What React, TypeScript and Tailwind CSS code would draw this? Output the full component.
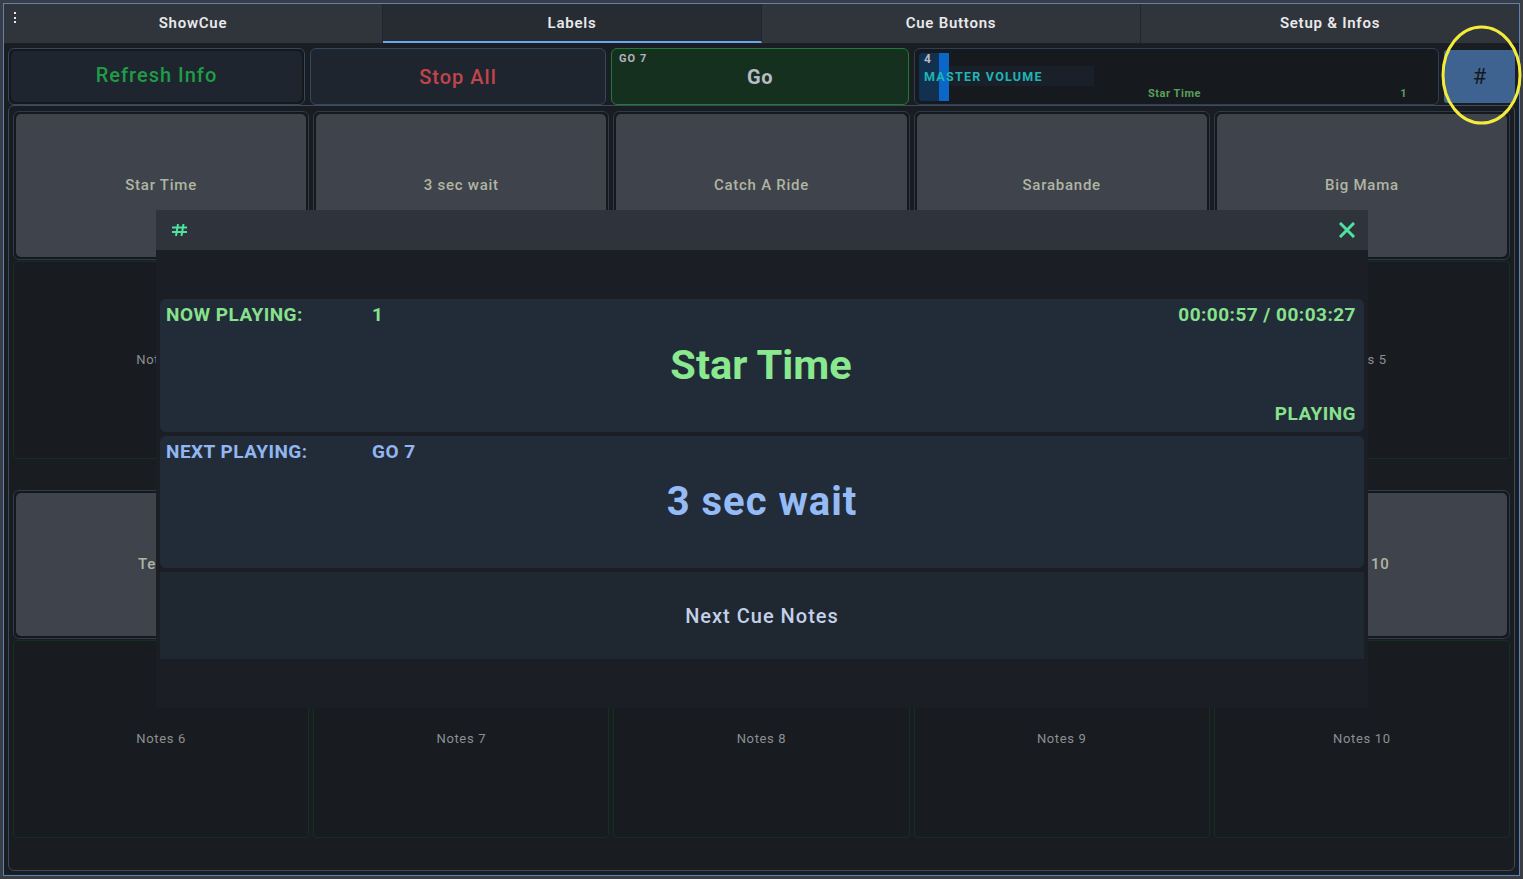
import React from "react";

const tabs = ["ShowCue", "Labels", "Cue Buttons", "Setup & Infos"];

const rows = [
  {
    cues: ["Star Time", "3 sec wait", "Catch A Ride", "Sarabande", "Big Mama"],
    notes: ["Notes 1", "Notes 2", "Notes 3", "Notes 4", "Notes 5"],
  },
  {
    cues: ["Test 6", "Test 7", "Test 8", "Test 9", "Test 10"],
    notes: ["Notes 6", "Notes 7", "Notes 8", "Notes 9", "Notes 10"],
  },
];

function HashIcon() {
  return (
    <svg width="15" height="12" viewBox="0 0 15 12" fill="none">
      <path d="M0 3.5H15M0 8H15" stroke="#4fe3a0" strokeWidth="2" />
      <path d="M6 0L4 12M11.5 0L9.5 12" stroke="#4fe3a0" strokeWidth="2" />
    </svg>
  );
}

function CloseIcon() {
  return (
    <svg width="16" height="16" viewBox="0 0 16 16" fill="none">
      <path d="M2 2L14 14M14 2L2 14" stroke="#4fe3a0" strokeWidth="3" strokeLinecap="square" />
    </svg>
  );
}

export default function App() {
  return (
    <div className="relative w-[1523px] h-[879px] overflow-hidden bg-[#3a3d43] p-[3px] font-['Roboto',sans-serif]">
      <div className="flex h-full flex-col border border-[#5a82b5] bg-[#1a1d22]">
        {/* tab bar */}
        <div className="relative flex h-[40px] shrink-0 border-b border-[#1c1f24] bg-[#30343b]">
          <div className="absolute left-[10px] top-[8px] flex flex-col gap-[2.5px]">
            <span className="h-[2px] w-[2px] bg-[#e8e9eb]" />
            <span className="h-[2px] w-[2px] bg-[#e8e9eb]" />
            <span className="h-[2px] w-[2px] bg-[#e8e9eb]" />
          </div>
          {tabs.map((t, i) => (
            <div
              key={t}
              className={[
                "flex flex-1 items-center justify-center text-[15px] font-semibold tracking-wider text-[#e8e9eb]",
                i < tabs.length - 1 ? "border-r border-[#22252b]" : "",
                i === 1 ? "border-b-2 border-b-[#66a6f5] bg-[#272b32] pt-[2px]" : "",
              ].join(" ")}
            >
              {t}
            </div>
          ))}
        </div>

        <div className="flex flex-1 flex-col px-[4px] pt-[4px] pb-[4px]">
          {/* top controls */}
          <div className="flex h-[57px] shrink-0 gap-[5px]">
            <div className="w-[297px] rounded-[6px] border border-[#34485e] bg-[#15181d] p-[2px]">
              <div className="flex h-full items-center justify-center rounded-[5px] bg-[#1f252e] pb-[4px] text-[20px] font-medium tracking-wider text-[#1f9c48]">
                Refresh Info
              </div>
            </div>
            <div className="flex w-[296px] items-center justify-center rounded-[6px] border border-[#34485e] bg-[#1f252e] text-[20px] font-medium tracking-wider text-[#c2444c]">
              Stop All
            </div>
            <div className="relative flex w-[298px] items-center justify-center rounded-[6px] border border-[#1f7a34] bg-[#16301f] text-[20px] font-bold tracking-wide text-[#b8bcc4]">
              <span className="absolute left-[7px] top-[3px] text-[11px] font-bold leading-[14px] tracking-widest text-[#b0b5bb]">
                GO 7
              </span>
              Go
            </div>
            <div className="relative flex flex-1 flex-col rounded-[6px] border border-[#2f3e51] bg-[#16191e] pl-[9px] pt-[3px]">
              <div className="absolute left-[19px] top-[17px] h-[20px] w-[160px] bg-[#1a2029]" />
              <div className="absolute left-[4px] top-[4px] bottom-[3px] flex w-[30px] rounded-[3px] bg-[#12304f]">
                <div className="ml-auto w-[10px] bg-[#0a66c7]" />
              </div>
              <div className="relative text-[12px] font-bold leading-[14px] text-[#b8bcc4]">4</div>
              <div className="relative mt-[1px] flex h-[20px] items-center text-[12.5px] font-bold tracking-widest text-[#1fb5b5]">
                MASTER VOLUME
              </div>
              <div className="relative flex pr-[31px] text-[11px] font-bold leading-[14px] tracking-wider text-[#5aa05a]">
                <span className="w-[224px]" />
                <span>Star Time</span>
                <span className="ml-auto">1</span>
              </div>
            </div>
            <div className="flex h-[53px] w-[71px] self-center items-center justify-center rounded-[3px] bg-[#3f6390] text-[22px] text-[#15191e]">
              #
            </div>
          </div>

          {/* cue grid */}
          <div className="flex-1 rounded-[6px] border border-[#3c4a5c] bg-[#191c21] px-[4px] pt-[5px]">
            {rows.map((row, r) => (
              <div key={r} className={["grid grid-cols-5 gap-[4px]", r === 1 ? "mt-[31px]" : ""].join(" ")}>
                {row.cues.map((c, i) => (
                  <div key={c} className="flex flex-col">
                    <div className="h-[149px] rounded-[6px] border border-[#2d3b4d] bg-[#15181c] p-[2px]">
                      <div className="flex h-full items-center justify-center rounded-[5px] bg-[#3f434b] text-[15px] font-medium tracking-wider text-[#b0b5a3]">
                        {c}
                      </div>
                    </div>
                    <div className="mt-[1px] flex h-[198px] items-center justify-center rounded-[4px] border border-[#143020] bg-[#181b1f] text-[13px] tracking-wider text-[#8c8f93]">
                      {row.notes[i]}
                    </div>
                  </div>
                ))}
              </div>
            ))}
          </div>
        </div>
      </div>

      {/* annotation ring */}
      <svg className="pointer-events-none absolute left-[1440px] top-[24px]" width="83" height="102" viewBox="0 0 83 102">
        <ellipse cx="41.5" cy="51" rx="38.5" ry="48" fill="none" stroke="#f4ec3c" strokeWidth="3" />
      </svg>

      {/* now playing dialog */}
      <div className="absolute left-[156px] top-[210px] flex w-[1212px] flex-col">
        <div className="flex h-[40px] items-center justify-between bg-[#2f343c] pl-[16px] pr-[13px]">
          <HashIcon />
          <CloseIcon />
        </div>
        <div className="flex flex-col gap-[4px] bg-[#1b1f25] px-[4px] py-[49px]">
          <div className="flex h-[133px] flex-col rounded-[6px] bg-[#222c39] px-[6px] pt-[4px] pr-[8px]">
            <div className="flex h-[24px] items-center text-[19px] font-bold tracking-wide text-[#88e28c]">
              <span className="w-[206px]">NOW PLAYING:</span>
              <span>1</span>
              <span className="ml-auto">00:00:57 / 00:03:27</span>
            </div>
            <div className="mt-[14px] text-center text-[41.5px] font-bold leading-[48px] text-[#8ae88e]">Star Time</div>
            <div className="mt-[13px] text-right text-[19px] font-bold leading-[24px] tracking-wide text-[#88e28c]">
              PLAYING
            </div>
          </div>
          <div className="flex h-[132px] flex-col rounded-[6px] bg-[#222c39] px-[6px] pt-[4px]">
            <div className="flex h-[24px] items-center text-[19px] font-bold tracking-wide text-[#92b6f0]">
              <span className="w-[206px]">NEXT PLAYING:</span>
              <span>GO 7</span>
            </div>
            <div className="mt-[14px] text-center text-[40px] font-bold leading-[48px] tracking-wide text-[#95bbf7]">
              3 sec wait
            </div>
          </div>
          <div className="flex h-[87px] items-center justify-center bg-[#1f2731] text-[20px] font-medium tracking-wider text-[#c3d0e8]">
            Next Cue Notes
          </div>
        </div>
      </div>
    </div>
  );
}
